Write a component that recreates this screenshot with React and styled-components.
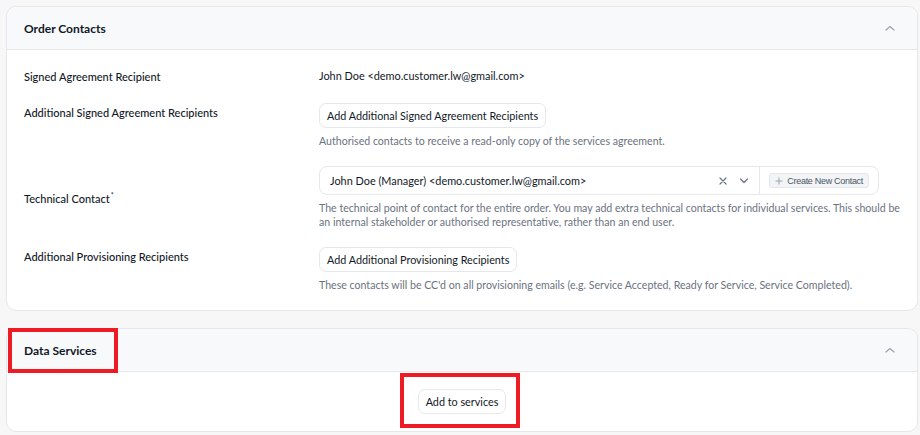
import { createGlobalStyle, styled } from "styled-components";

const GlobalStyle = createGlobalStyle`
  html, body {
    margin: 0;
    padding: 0;
    background: #f7f7f8;
  }
  body {
    font-family: Lato, "Liberation Sans", sans-serif;
    color: #111827;
  }
`;

const ChevronUp = () => (
  <svg width="10" height="6" viewBox="0 0 10 6" fill="none">
    <path d="M1 5L5 1.5L9 5" stroke="#9ca3af" strokeWidth="1.2" strokeLinecap="round" strokeLinejoin="round" />
  </svg>
);

const ChevronDown = () => (
  <svg width="10" height="6" viewBox="0 0 10 6" fill="none">
    <path d="M1.5 1L5 4.5L8.5 1" stroke="#6b7280" strokeWidth="1.2" strokeLinecap="round" strokeLinejoin="round" />
  </svg>
);

const Cross = () => (
  <svg width="8" height="8" viewBox="0 0 8 8" fill="none">
    <path d="M1 1L7 7M7 1L1 7" stroke="#6b7280" strokeWidth="1.2" strokeLinecap="round" />
  </svg>
);

const Plus = () => (
  <svg width="8" height="8" viewBox="0 0 8 8" fill="none">
    <path d="M4 0.5V7.5M0.5 4H7.5" stroke="#9ca3af" strokeWidth="1" />
  </svg>
);

const App = () => {
  return (
    <Page>
      <GlobalStyle />
      <Card>
        <Header>
          <Title>Order Contacts</Title>
          <ChevronUp />
        </Header>
        <Body>
          <Row $align="center">
            <Label>Signed Agreement Recipient</Label>
            <Value>John Doe &lt;demo.customer.lw@gmail.com&gt;</Value>
          </Row>
          <Row>
            <Label $top>Additional Signed Agreement Recipients</Label>
            <Field>
              <div>
                <Button>Add Additional Signed Agreement Recipients</Button>
              </div>
              <Help>Authorised contacts to receive a read-only copy of the services agreement.</Help>
            </Field>
          </Row>
          <Row $align="center">
            <Label>
              Technical Contact<Req>*</Req>
            </Label>
            <Field>
              <Select>
                <SelectValue>John Doe (Manager) &lt;demo.customer.lw@gmail.com&gt;</SelectValue>
                <SelectIcons>
                  <Cross />
                  <ChevronDown />
                </SelectIcons>
                <SelectAddon>
                  <CreateButton>
                    <Plus />
                    Create New Contact
                  </CreateButton>
                </SelectAddon>
              </Select>
              <Help>
                The technical point of contact for the entire order. You may add extra technical contacts for individual
                services. This should be an internal stakeholder or authorised representative, rather than an end user.
              </Help>
            </Field>
          </Row>
          <Row>
            <Label $top>Additional Provisioning Recipients</Label>
            <Field>
              <div>
                <Button>Add Additional Provisioning Recipients</Button>
              </div>
              <Help>
                These contacts will be CC'd on all provisioning emails (e.g. Service Accepted, Ready for Service, Service
                Completed).
              </Help>
            </Field>
          </Row>
        </Body>
      </Card>
      <Card>
        <Header>
          <Title>Data Services</Title>
          <ChevronUp />
          <Marker $left={1} $top={-1} $width={110} $height={45} />
        </Header>
        <CenterBody>
          <MarkerWrap>
            <Button>Add to services</Button>
            <Marker $left={-18} $top={-16} $width={120} $height={55} />
          </MarkerWrap>
        </CenterBody>
      </Card>
    </Page>
  );
};

const Page = styled.div`
  display: flex;
  flex-direction: column;
  gap: 17px;
  padding: 6px 2px 3px 6px;
`;

const Card = styled.section`
  background: #fff;
  border: 1px solid #e5e7eb;
  border-radius: 10px;
  overflow: visible;
`;

const Header = styled.div`
  position: relative;
  display: flex;
  align-items: center;
  justify-content: space-between;
  height: 42px;
  padding: 0 22px 0 17px;
  background: #f8f9fb;
  border-bottom: 1px solid #e5e7eb;
  border-radius: 10px 10px 0 0;
`;

const Title = styled.h2`
  margin: 0;
  font-size: 12px;
  font-weight: 700;
  color: #111827;
`;

const Body = styled.div`
  display: flex;
  flex-direction: column;
  gap: 18px;
  padding: 17px 17px 18px;
`;

const Row = styled.div`
  display: grid;
  grid-template-columns: 295px 1fr;
  align-items: ${(p) => (p.$align === "center" ? "center" : "start")};
`;

const Label = styled.div`
  font-size: 11px;
  font-weight: 500;
  color: #111827;
  padding-top: ${(p) => (p.$top ? "3px" : "0")};
`;

const Req = styled.sup`
  font-size: 7px;
  margin-left: 1px;
`;

const Value = styled.div`
  font-size: 10.9px;
  line-height: 18px;
`;

const Field = styled.div`
  display: flex;
  flex-direction: column;
  gap: 6px;
`;

const Button = styled.button`
  font-family: Lato, "Liberation Sans", sans-serif;
  font-size: 10.8px;
  color: #111827;
  background: #fff;
  border: 1px solid #e5e7eb;
  border-radius: 7px;
  height: 25px;
  padding: 0 7px;
  cursor: pointer;
`;

const Help = styled.p`
  margin: 0;
  font-size: 10.6px;
  line-height: 14px;
  color: #6b7280;
`;

const Select = styled.div`
  display: flex;
  align-items: center;
  height: 27px;
  border: 1px solid #e5e7eb;
  border-radius: 8px;
  width: 558px;
`;

const SelectValue = styled.div`
  flex: 1;
  padding-left: 10px;
  font-size: 10.9px;
`;

const SelectIcons = styled.div`
  display: flex;
  align-items: center;
  gap: 12px;
  padding: 0 10px;
`;

const SelectAddon = styled.div`
  display: flex;
  align-items: center;
  height: 100%;
  padding: 0 9px;
  border-left: 1px solid #e5e7eb;
`;

const CreateButton = styled.button`
  display: flex;
  align-items: center;
  gap: 4px;
  height: 15px;
  padding: 0 5px;
  font-family: "Liberation Sans", sans-serif;
  font-size: 9px;
  letter-spacing: -0.3px;
  color: #4b5563;
  background: #f3f4f6;
  border: 1px solid #e5e7eb;
  border-radius: 3px;
`;

const CenterBody = styled.div`
  display: flex;
  justify-content: center;
  padding: 17px 0 17px;
`;

const MarkerWrap = styled.div`
  position: relative;
`;

const Marker = styled.div`
  position: absolute;
  left: ${(p) => p.$left}px;
  top: ${(p) => p.$top}px;
  width: ${(p) => p.$width}px;
  height: ${(p) => p.$height}px;
  border: 4px solid #ed1c24;
  box-sizing: border-box;
  pointer-events: none;
`;

export default App;
